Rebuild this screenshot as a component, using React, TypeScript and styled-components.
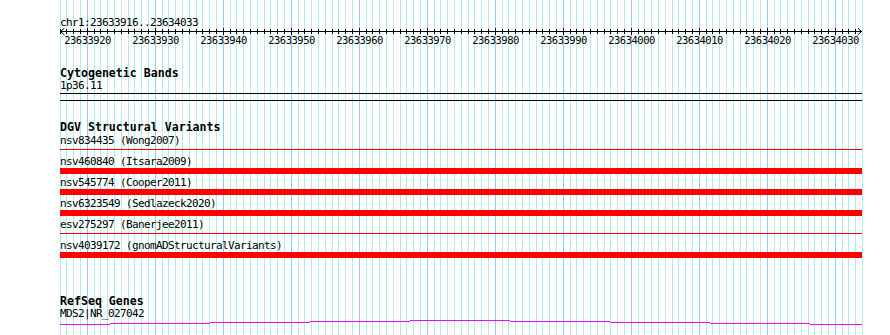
import styled, { createGlobalStyle } from 'styled-components';

const VIEW_START = 23633916;
const VIEW_END = 23634033;
const BP_WIDTH = 6.8;
const BASES = VIEW_END - VIEW_START + 1;
const TRACK_WIDTH = 802;
const PAGE_HEIGHT = 335;

// pixel column of the left edge of base k (0 = VIEW_START)
const baseX = (k: number) => Math.floor(k * BP_WIDTH) + 0.5;

interface Feature {
  name: string;
  thick: boolean;
}

const dgvFeatures: Feature[] = [
  { name: 'nsv834435 (Wong2007)', thick: false },
  { name: 'nsv460840 (Itsara2009)', thick: true },
  { name: 'nsv545774 (Cooper2011)', thick: true },
  { name: 'nsv6323549 (Sedlazeck2020)', thick: true },
  { name: 'esv275297 (Banerjee2011)', thick: false },
  { name: 'nsv4039172 (gnomADStructuralVariants)', thick: true },
];

// the transcript line drifts a pixel per 100px, as the reference draws it
const geneSegments = [
  { x: 0, w: 50, y: 4 },
  { x: 50, w: 100, y: 3 },
  { x: 150, w: 100, y: 2 },
  { x: 250, w: 100, y: 1 },
  { x: 350, w: 100, y: 0 },
  { x: 450, w: 100, y: 1 },
  { x: 550, w: 100, y: 2 },
  { x: 650, w: 100, y: 3 },
  { x: 750, w: 52, y: 4 },
];

const GlobalStyle = createGlobalStyle`
  html, body {
    margin: 0;
    padding: 0;
    background: #fff;
  }
  body {
    font-family: 'DejaVu Sans Mono', 'Liberation Mono', monospace;
    color: #000;
  }
`;

function Grid() {
  const lines = [];
  for (let k = 0; k <= BASES; k++) {
    const major = (VIEW_START + k) % 10 === 0;
    lines.push(
      <line
        key={k}
        x1={baseX(k)}
        x2={baseX(k)}
        y1={0}
        y2={PAGE_HEIGHT}
        stroke={major ? '#87cefa' : '#afeeee'}
        strokeWidth={1}
      />
    );
  }
  return (
    <GridLayer width={TRACK_WIDTH + 1} height={PAGE_HEIGHT} shapeRendering="crispEdges">
      {lines}
    </GridLayer>
  );
}

function Ruler() {
  const ticks = [];
  const labels = [];
  for (let k = 0; k < BASES; k++) {
    const pos = VIEW_START + k;
    const major = pos % 10 === 0;
    const x = baseX(k);
    ticks.push(
      <line key={k} x1={x} x2={x} y1={major ? 0 : 1} y2={major ? 7 : 6} stroke="#000" />
    );
    if (major) {
      labels.push(
        <RulerLabel key={k} x={x} y={16} textAnchor="middle">
          {pos}
        </RulerLabel>
      );
    }
  }
  return (
    <RulerSvg width={TRACK_WIDTH + 1} height={20}>
      <g shapeRendering="crispEdges">
        <line x1={0} x2={TRACK_WIDTH} y1={3.5} y2={3.5} stroke="#000" />
        {ticks}
      </g>
      <polyline points="4.5,0 0.5,3.5 4.5,7" fill="none" stroke="#000" />
      <polyline points="797.5,0 801.5,3.5 797.5,7" fill="none" stroke="#000" />
      {labels}
    </RulerSvg>
  );
}

export default function App() {
  return (
    <Page>
      <GlobalStyle />
      <Grid />
      <Content>
        <LocusLabel>
          chr1:{VIEW_START}..{VIEW_END}
        </LocusLabel>
        <Ruler />

        <Track $gap={19}>
          <TrackTitle>Cytogenetic Bands</TrackTitle>
          <FeatureLabel>1p36.11</FeatureLabel>
          <CytoBand />
        </Track>

        <Track $gap={20}>
          <TrackTitle>DGV Structural Variants</TrackTitle>
          <FeatureList>
            {dgvFeatures.map((f) => (
              <FeatureRow key={f.name}>
                <FeatureLabel>{f.name}</FeatureLabel>
                <GlyphLane>
                  <VariantBar $thick={f.thick} />
                </GlyphLane>
              </FeatureRow>
            ))}
          </FeatureList>
        </Track>

        <Track $gap={34}>
          <TrackTitle>RefSeq Genes</TrackTitle>
          <FeatureLabel>MDS2|NR_027042</FeatureLabel>
          <GeneSvg width={TRACK_WIDTH} height={6} shapeRendering="crispEdges">
            {geneSegments.map((s) => (
              <rect key={s.x} x={s.x} y={s.y} width={s.w} height={1} fill="#ff00ff" />
            ))}
          </GeneSvg>
        </Track>
      </Content>
    </Page>
  );
}

const Page = styled.div`
  position: relative;
  width: 890px;
  height: ${PAGE_HEIGHT}px;
  overflow: hidden;
  background: #fff;
`;

const GridLayer = styled.svg`
  position: absolute;
  top: 0;
  left: 60px;
  display: block;
`;

const Content = styled.div`
  position: relative;
  display: flex;
  flex-direction: column;
  width: ${TRACK_WIDTH}px;
  padding: 17px 0 0 60px;
`;

const LocusLabel = styled.div`
  font-size: 11px;
  line-height: 11px;
  letter-spacing: -0.62px;
  white-space: nowrap;
`;

const RulerSvg = styled.svg`
  display: block;
`;

const RulerLabel = styled.text`
  font-family: 'DejaVu Sans Mono', 'Liberation Mono', monospace;
  font-size: 10.5px;
  letter-spacing: -0.5px;
  fill: #000;
`;

const Track = styled.section<{ $gap: number }>`
  display: flex;
  flex-direction: column;
  margin-top: ${(p) => p.$gap}px;
`;

const TrackTitle = styled.div`
  font-size: 11.6px;
  font-weight: bold;
  line-height: 13px;
  white-space: nowrap;
`;

const FeatureLabel = styled.div`
  font-size: 11px;
  line-height: 12px;
  letter-spacing: -0.62px;
  white-space: nowrap;
`;

const CytoBand = styled.div`
  margin-top: 1px;
  height: 6px;
  border-top: 1px solid #000;
  border-bottom: 1px solid #000;
`;

const FeatureList = styled.div`
  display: flex;
  flex-direction: column;
  padding-top: 1px;
`;

const FeatureRow = styled.div`
  display: flex;
  flex-direction: column;
  height: 21px;
`;

const GlyphLane = styled.div`
  display: flex;
  align-items: flex-start;
  height: 9px;
`;

const VariantBar = styled.div<{ $thick: boolean }>`
  width: 100%;
  height: ${(p) => (p.$thick ? 6 : 1)}px;
  margin-top: ${(p) => (p.$thick ? 0 : 2)}px;
  background: #ff0000;
`;

const GeneSvg = styled.svg`
  display: block;
`;
